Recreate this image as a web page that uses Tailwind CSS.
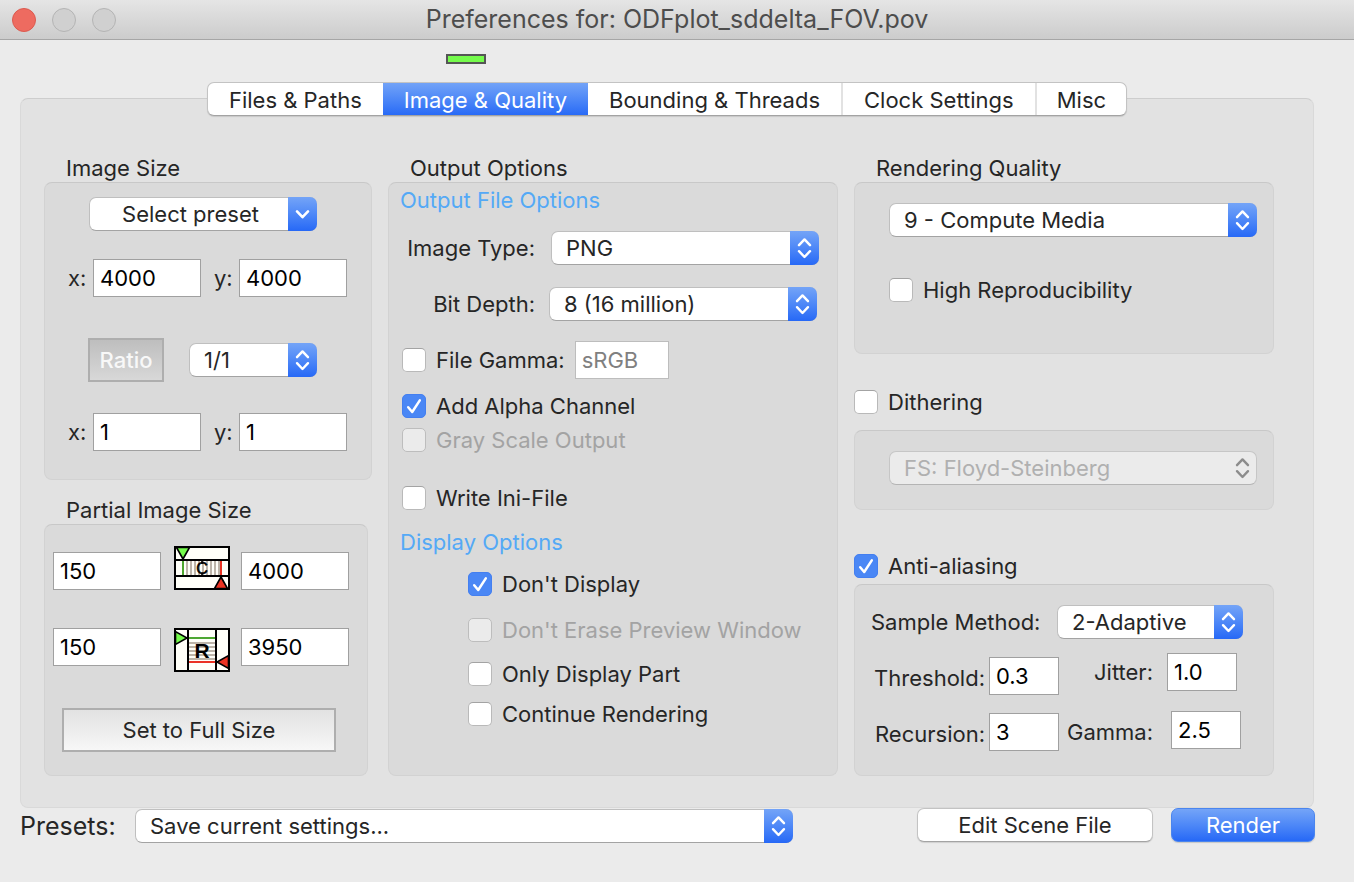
<!DOCTYPE html>
<html lang="en">
<head>
<meta charset="utf-8">
<title>Preferences for: ODFplot_sddelta_FOV.pov</title>
<script src="https://cdn.jsdelivr.net/npm/@tailwindcss/browser@4"></script>
</head>
<body class="flex min-h-screen flex-col bg-[#ebebeb] font-['Inter','Liberation_Sans',sans-serif] text-[22px] leading-7 text-[#262626]">

<svg class="hidden" aria-hidden="true">
  <symbol id="updown" viewBox="0 0 29 34"><path d="M9 14.2 14.5 8.4 20 14.2M9 20.2 14.5 26 20 20.2" fill="none" stroke="currentColor" stroke-width="2.4" stroke-linecap="round" stroke-linejoin="round"/></symbol>
  <symbol id="down" viewBox="0 0 29 34"><path d="M9 14.4 14.5 20.2 20 14.4" fill="none" stroke="currentColor" stroke-width="2.6" stroke-linecap="round" stroke-linejoin="round"/></symbol>
  <symbol id="tick" viewBox="0 0 24 24"><path d="M6.2 13.2 10.2 18 17.8 6.4" fill="none" stroke="currentColor" stroke-width="2.5" stroke-linecap="round" stroke-linejoin="round"/></symbol>
</svg>

<header class="flex h-10 shrink-0 items-center border-b border-[#a6a6a6] bg-linear-to-b from-[#e5e5e5] to-[#cccccc] px-3">
  <div class="flex flex-1 gap-4">
    <button type="button" aria-label="Close" class="size-6 rounded-full border border-[#dc5a4f] bg-[#ee6b60]"></button>
    <button type="button" aria-label="Minimize" class="size-6 rounded-full border border-[#b4b4b4] bg-[#d0d0d0]"></button>
    <button type="button" aria-label="Zoom" class="size-6 rounded-full border border-[#b4b4b4] bg-[#d0d0d0]"></button>
  </div>
  <h1 class="pb-0.5 text-[25px] text-[#4d4d4d]">Preferences for: ODFplot_sddelta_FOV.pov</h1>
  <div class="flex-1"></div>
</header>

<main class="flex flex-col pr-10 pl-5">
  <div class="mt-[14px] ml-[426px] h-[10px] w-10 border-2 border-[#555555] bg-[#75fb4c]"></div>

  <div role="tablist" class="z-10 mt-[18px] -mb-[18px] flex h-[34px] self-center overflow-hidden rounded-[7px] border border-[#c3c3c3] border-b-[#a3a3a3] bg-white shadow-[0_1px_1px_rgba(0,0,0,0.12)]">
    <button type="button" role="tab" aria-selected="false" class="-my-px px-[21px] pt-0.5">Files &amp; Paths</button>
    <button type="button" role="tab" aria-selected="true" class="-my-px bg-linear-to-b from-[#74a4f7] to-[#2668f6] px-[21px] pt-0.5 text-white">Image &amp; Quality</button>
    <button type="button" role="tab" aria-selected="false" class="-my-px px-[21px] pt-0.5">Bounding &amp; Threads</button>
    <button type="button" role="tab" aria-selected="false" class="-my-px border-l-2 border-[#e2e2e2] px-[21px] pt-0.5">Clock Settings</button>
    <button type="button" role="tab" aria-selected="false" class="-my-px border-l-2 border-[#e2e2e2] px-5 pt-0.5">Misc</button>
  </div>

  <div role="tabpanel" class="grid grid-cols-[328fr_450fr_420fr] gap-4 rounded-lg border border-[#d9d9d9] border-t-[#cdcdcd] bg-[#e2e2e2] pt-[55px] pr-[39px] pb-[31px] pl-[23px]">

    <div class="flex flex-col">
      <h2 class="pl-[22px]">Image Size</h2>
      <section class="flex flex-col rounded-lg border border-[#d2d2d2] border-t-[#c8c8c8] bg-[#dadada] pt-[14px] pb-7 pl-[23px]">
        <div class="ml-[21px] grid w-[228px]">
          <select aria-label="Size preset" class="col-start-1 row-start-1 h-[34px] appearance-none rounded-[7px] border border-[#bfbfbf] border-b-[#a3a3a3] bg-white pr-[29px] pl-1 text-center [text-align-last:center]"><option>Select preset</option></select>
          <svg class="pointer-events-none col-start-1 row-start-1 h-[34px] w-[29px] justify-self-end rounded-r-[7px] bg-linear-to-b from-[#74a4f7] to-[#2668f6] text-white"><use href="#down"/></svg>
        </div>
        <div class="mt-7 flex items-center">
          <label for="sx" class="w-[25px]">x:</label>
          <input id="sx" value="4000" class="h-[38px] w-[108px] border border-[#a0a0a0] bg-white px-1.5 text-black">
          <label for="sy" class="ml-[13px] w-[25px]">y:</label>
          <input id="sy" value="4000" class="h-[38px] w-[108px] border border-[#a0a0a0] bg-white px-1.5 text-black">
        </div>
        <div class="mt-[41px] ml-5 flex items-center gap-[25px]">
          <button type="button" class="h-11 w-[76px] border-2 border-[#aeaeae] bg-linear-to-b from-[#bebebe] to-[#d8d8d8] font-medium text-[#f8f8f8]">Ratio</button>
          <div class="grid w-32">
            <select aria-label="Aspect ratio" class="col-start-1 row-start-1 h-[34px] appearance-none rounded-[7px] border border-[#bfbfbf] border-b-[#a3a3a3] bg-white pr-[29px] pl-[14px]"><option>1/1</option></select>
            <svg class="pointer-events-none col-start-1 row-start-1 h-[34px] w-[29px] justify-self-end rounded-r-[7px] bg-linear-to-b from-[#74a4f7] to-[#2668f6] text-white"><use href="#updown"/></svg>
          </div>
        </div>
        <div class="mt-[31px] flex items-center">
          <label for="rx" class="w-[25px]">x:</label>
          <input id="rx" value="1" class="h-[38px] w-[108px] border border-[#a0a0a0] bg-white px-1.5 text-black">
          <label for="ry" class="ml-[13px] w-[25px]">y:</label>
          <input id="ry" value="1" class="h-[38px] w-[108px] border border-[#a0a0a0] bg-white px-1.5 text-black">
        </div>
      </section>

      <h2 class="mt-4 pl-[22px]">Partial Image Size</h2>
      <section class="mr-1 flex flex-1 flex-col rounded-lg border border-[#d2d2d2] border-t-[#c8c8c8] bg-[#dadada] pt-[21px] pb-[23px] pl-2">
        <div class="flex items-end">
          <input aria-label="Start column" value="150" class="h-[38px] w-[108px] border border-[#a0a0a0] bg-white px-1.5 text-black">
          <svg role="img" aria-label="Columns" viewBox="0 0 56 44" class="mr-[11px] ml-[13px] h-11 w-14">
            <rect x="1" y="1" width="54" height="42" fill="#fffff8" stroke="#000" stroke-width="2"/>
            <path d="M13 15V29M17 15V29M21 15V29M25 15V29M29 15V29M33 15V29M37 15V29M41 15V29M45 15V29" stroke="#bdb5a9" stroke-width="2"/>
            <path d="M9 15V29" stroke="#4ea72e" stroke-width="2"/>
            <path d="M47 15V29" stroke="#ea3323" stroke-width="2"/>
            <path d="M2 14H54M2 30H54" stroke="#000" stroke-width="2"/>
            <path d="M2.500 1.500H15.500L9 13Z" fill="#75fb4c" stroke="#000" stroke-width="1.600"/>
            <path d="M40.500 42.500H53.500L47 31Z" fill="#ea3323" stroke="#000" stroke-width="1.600"/>
            <path d="M28 15V18M28 26.500V29" stroke="#000" stroke-width="1.600"/>
            <text x="28" y="28" text-anchor="middle" font-family="Liberation Sans, sans-serif" font-size="16" stroke="#000" stroke-width=".6">C</text>
          </svg>
          <input aria-label="End column" value="4000" class="h-[38px] w-[108px] border border-[#a0a0a0] bg-white px-1.5 text-black">
        </div>
        <div class="mt-[38px] flex items-start">
          <input aria-label="Start row" value="150" class="h-[38px] w-[108px] border border-[#a0a0a0] bg-white px-1.5 text-black">
          <svg role="img" aria-label="Rows" viewBox="0 0 56 44" class="mr-[11px] ml-[13px] h-11 w-14">
            <rect x="1" y="1" width="54" height="42" fill="#fffff8" stroke="#000" stroke-width="2"/>
            <path d="M15 15H41M15 19H41M15 23H41M15 27H41M15 31H41" stroke="#bdb5a9" stroke-width="2"/>
            <path d="M15 10H41" stroke="#4ea72e" stroke-width="2"/>
            <path d="M15 34H41" stroke="#ea3323" stroke-width="2"/>
            <path d="M14 2V42M42 2V42" stroke="#000" stroke-width="2"/>
            <path d="M1.500 3.500V16.500L13 10Z" fill="#75fb4c" stroke="#000" stroke-width="1.600"/>
            <path d="M54.500 27.500V40.500L43 34Z" fill="#ea3323" stroke="#000" stroke-width="1.600"/>
            <text x="28" y="30" text-anchor="middle" font-family="Liberation Sans, sans-serif" font-size="21" font-weight="700">R</text>
          </svg>
          <input aria-label="End row" value="3950" class="h-[38px] w-[108px] border border-[#a0a0a0] bg-white px-1.5 text-black">
        </div>
        <button type="button" class="mt-9 ml-[9px] h-11 w-[274px] border-2 border-[#aeaeae] bg-linear-to-b from-[#e2e2e2] to-[#f7f7f7]">Set to Full Size</button>
      </section>
    </div>

    <div class="flex flex-col">
      <h2 class="pl-[22px]">Output Options</h2>
      <section class="flex flex-1 flex-col rounded-lg border border-[#d2d2d2] border-t-[#c8c8c8] bg-[#dadada] pt-[3px] pl-[11px]">
        <h3 class="text-[#54a9f6]">Output File Options</h3>
        <div class="mt-[17px] flex items-center gap-4">
          <label for="itype" class="w-[135px] text-right">Image Type:</label>
          <div class="grid w-[268px]">
            <select id="itype" class="col-start-1 row-start-1 h-[34px] appearance-none rounded-[7px] border border-[#bfbfbf] border-b-[#a3a3a3] bg-white pr-[29px] pl-[14px]"><option>PNG</option></select>
            <svg class="pointer-events-none col-start-1 row-start-1 h-[34px] w-[29px] justify-self-end rounded-r-[7px] bg-linear-to-b from-[#74a4f7] to-[#2668f6] text-white"><use href="#updown"/></svg>
          </div>
        </div>
        <div class="mt-[22px] flex items-center gap-[14px]">
          <label for="depth" class="w-[135px] text-right">Bit Depth:</label>
          <div class="grid w-[268px]">
            <select id="depth" class="col-start-1 row-start-1 h-[34px] appearance-none rounded-[7px] border border-[#bfbfbf] border-b-[#a3a3a3] bg-white pr-[29px] pl-[14px]"><option>8 (16 million)</option></select>
            <svg class="pointer-events-none col-start-1 row-start-1 h-[34px] w-[29px] justify-self-end rounded-r-[7px] bg-linear-to-b from-[#74a4f7] to-[#2668f6] text-white"><use href="#updown"/></svg>
          </div>
        </div>
        <div class="mt-5 ml-0.5 flex items-center gap-2.5">
          <label class="flex items-center gap-2.5"><input type="checkbox" class="size-6 appearance-none rounded-[5px] border border-[#b9b9b9] border-t-[#a3a3a3] bg-white">File Gamma:</label>
          <input aria-label="File gamma value" value="sRGB" disabled class="h-[38px] w-[94px] border border-[#bdbdbd] bg-white px-1.5 text-[#808080]">
        </div>
        <label class="mt-[13px] ml-0.5 flex items-center gap-2.5">
          <span class="grid size-6 text-white"><input type="checkbox" checked class="peer col-start-1 row-start-1 size-6 appearance-none rounded-[5px] border border-[#b9b9b9] bg-white checked:border-[#447ff0] checked:bg-[#4a87f5]"><svg class="pointer-events-none invisible col-start-1 row-start-1 size-6 peer-checked:visible"><use href="#tick"/></svg></span>
          Add Alpha Channel</label>
        <label class="mt-1.5 ml-0.5 flex items-center gap-2.5 text-[#a3a3a3]"><input type="checkbox" disabled class="size-6 appearance-none rounded-[5px] border border-[#bdbdbd] bg-[#ebebeb]">Gray Scale Output</label>
        <label class="mt-[30px] ml-0.5 flex items-center gap-2.5"><input type="checkbox" class="size-6 appearance-none rounded-[5px] border border-[#b9b9b9] border-t-[#a3a3a3] bg-white">Write Ini-File</label>
        <h3 class="mt-4 text-[#54a9f6]">Display Options</h3>
        <div class="ml-[68px] flex flex-col">
          <label class="mt-[14px] flex items-center gap-2.5">
            <span class="grid size-6 text-white"><input type="checkbox" checked class="peer col-start-1 row-start-1 size-6 appearance-none rounded-[5px] border border-[#b9b9b9] bg-white checked:border-[#447ff0] checked:bg-[#4a87f5]"><svg class="pointer-events-none invisible col-start-1 row-start-1 size-6 peer-checked:visible"><use href="#tick"/></svg></span>
            Don't Display</label>
          <label class="mt-[18px] flex items-center gap-2.5 whitespace-nowrap text-[#a3a3a3]"><input type="checkbox" disabled class="size-6 appearance-none rounded-[5px] border border-[#bdbdbd] bg-[#ebebeb]">Don't Erase Preview Window</label>
          <label class="mt-4 flex items-center gap-2.5"><input type="checkbox" class="size-6 appearance-none rounded-[5px] border border-[#b9b9b9] border-t-[#a3a3a3] bg-white">Only Display Part</label>
          <label class="mt-3 flex items-center gap-2.5"><input type="checkbox" class="size-6 appearance-none rounded-[5px] border border-[#b9b9b9] border-t-[#a3a3a3] bg-white">Continue Rendering</label>
        </div>
      </section>
    </div>

    <div class="flex flex-col">
      <h2 class="pl-[22px]">Rendering Quality</h2>
      <section class="flex flex-col rounded-lg border border-[#d2d2d2] border-t-[#c8c8c8] bg-[#dadada] pt-5 pr-4 pb-[49px] pl-[34px]">
        <div class="grid">
          <select aria-label="Rendering quality" class="col-start-1 row-start-1 h-[34px] appearance-none rounded-[7px] border border-[#bfbfbf] border-b-[#a3a3a3] bg-white pr-[29px] pl-[14px]"><option>9 - Compute Media</option></select>
          <svg class="pointer-events-none col-start-1 row-start-1 h-[34px] w-[29px] justify-self-end rounded-r-[7px] bg-linear-to-b from-[#74a4f7] to-[#2668f6] text-white"><use href="#updown"/></svg>
        </div>
        <label class="mt-[39px] flex items-center gap-2.5"><input type="checkbox" class="size-6 appearance-none rounded-[5px] border border-[#b9b9b9] border-t-[#a3a3a3] bg-white">High Reproducibility</label>
      </section>

      <label class="mt-[34px] flex items-center gap-2.5"><input type="checkbox" class="size-6 appearance-none rounded-[5px] border border-[#b9b9b9] border-t-[#a3a3a3] bg-white">Dithering</label>
      <section class="mt-[14px] rounded-lg border border-[#d2d2d2] border-t-[#c8c8c8] bg-[#dadada] pt-5 pr-4 pb-6 pl-[34px]">
        <div class="grid text-[#b0b0b0]">
          <select aria-label="Dithering method" disabled class="col-start-1 row-start-1 h-[34px] appearance-none rounded-[7px] border border-[#c6c6c6] border-b-[#b4b4b4] bg-[#ebebeb] pr-[29px] pl-[14px] opacity-100"><option>FS: Floyd-Steinberg</option></select>
          <svg class="pointer-events-none col-start-1 row-start-1 h-[34px] w-[29px] justify-self-end text-[#8c8c8c]"><use href="#updown"/></svg>
        </div>
      </section>

      <label class="mt-[42px] flex items-center gap-2.5">
        <span class="grid size-6 text-white"><input type="checkbox" checked class="peer col-start-1 row-start-1 size-6 appearance-none rounded-[5px] border border-[#b9b9b9] bg-white checked:border-[#447ff0] checked:bg-[#4a87f5]"><svg class="pointer-events-none invisible col-start-1 row-start-1 size-6 peer-checked:visible"><use href="#tick"/></svg></span>
        Anti-aliasing</label>
      <section class="mt-1 flex flex-1 flex-col rounded-lg border border-[#d2d2d2] border-t-[#c8c8c8] bg-[#dadada] pt-5 pl-4">
        <div class="flex items-center">
          <label for="sample" class="w-[186px] whitespace-nowrap">Sample Method:</label>
          <div class="grid w-[186px]">
            <select id="sample" class="col-start-1 row-start-1 h-[34px] appearance-none rounded-[7px] border border-[#bfbfbf] border-b-[#a3a3a3] bg-white pr-[29px] pl-[14px]"><option>2-Adaptive</option></select>
            <svg class="pointer-events-none col-start-1 row-start-1 h-[34px] w-[29px] justify-self-end rounded-r-[7px] bg-linear-to-b from-[#74a4f7] to-[#2668f6] text-white"><use href="#updown"/></svg>
          </div>
        </div>
        <div class="mt-[14px] flex">
          <div class="mt-1 flex flex-col gap-[18px]">
            <div class="flex items-center gap-1">
              <label for="thr" class="w-[114px] pt-1 text-right">Threshold:</label>
              <input id="thr" value="0.3" class="h-[38px] w-[70px] border border-[#a0a0a0] bg-white px-1.5 text-black">
            </div>
            <div class="flex items-center gap-1">
              <label for="rec" class="w-[114px] pt-1 text-right">Recursion:</label>
              <input id="rec" value="3" class="h-[38px] w-[70px] border border-[#a0a0a0] bg-white px-1.5 text-black">
            </div>
          </div>
          <div class="flex flex-col gap-5">
            <div class="flex items-center gap-[14px]">
              <label for="jit" class="w-[94px] text-right">Jitter:</label>
              <input id="jit" value="1.0" class="h-[38px] w-[70px] border border-[#a0a0a0] bg-white px-1.5 text-black">
            </div>
            <div class="flex items-center gap-[18px]">
              <label for="gam" class="w-[94px] pt-1 text-right">Gamma:</label>
              <input id="gam" value="2.5" class="h-[38px] w-[70px] border border-[#a0a0a0] bg-white px-1.5 text-black">
            </div>
          </div>
        </div>
      </section>
    </div>
  </div>

  <footer class="-mr-px flex items-start">
    <label for="presets" class="mt-1 w-[115px] text-[25px]">Presets:</label>
    <div class="mt-px grid max-w-[658px] flex-1">
      <select id="presets" class="col-start-1 row-start-1 h-[34px] appearance-none rounded-[7px] border border-[#bfbfbf] border-b-[#a3a3a3] bg-white pr-[29px] pl-[14px]"><option>Save current settings...</option></select>
      <svg class="pointer-events-none col-start-1 row-start-1 h-[34px] w-[29px] justify-self-end rounded-r-[7px] bg-linear-to-b from-[#74a4f7] to-[#2668f6] text-white"><use href="#updown"/></svg>
    </div>
    <button type="button" class="ml-auto h-[34px] w-[236px] rounded-[7px] border border-[#c3c3c3] border-b-[#a3a3a3] bg-white shadow-[0_1px_1px_rgba(0,0,0,0.12)]">Edit Scene File</button>
    <button type="button" class="ml-[18px] h-[34px] w-36 rounded-[7px] border border-[#4a85ee] bg-linear-to-b from-[#74a4f7] to-[#2668f6] text-white shadow-[0_1px_1px_rgba(0,0,0,0.15)]">Render</button>
  </footer>
</main>
</body>
</html>
